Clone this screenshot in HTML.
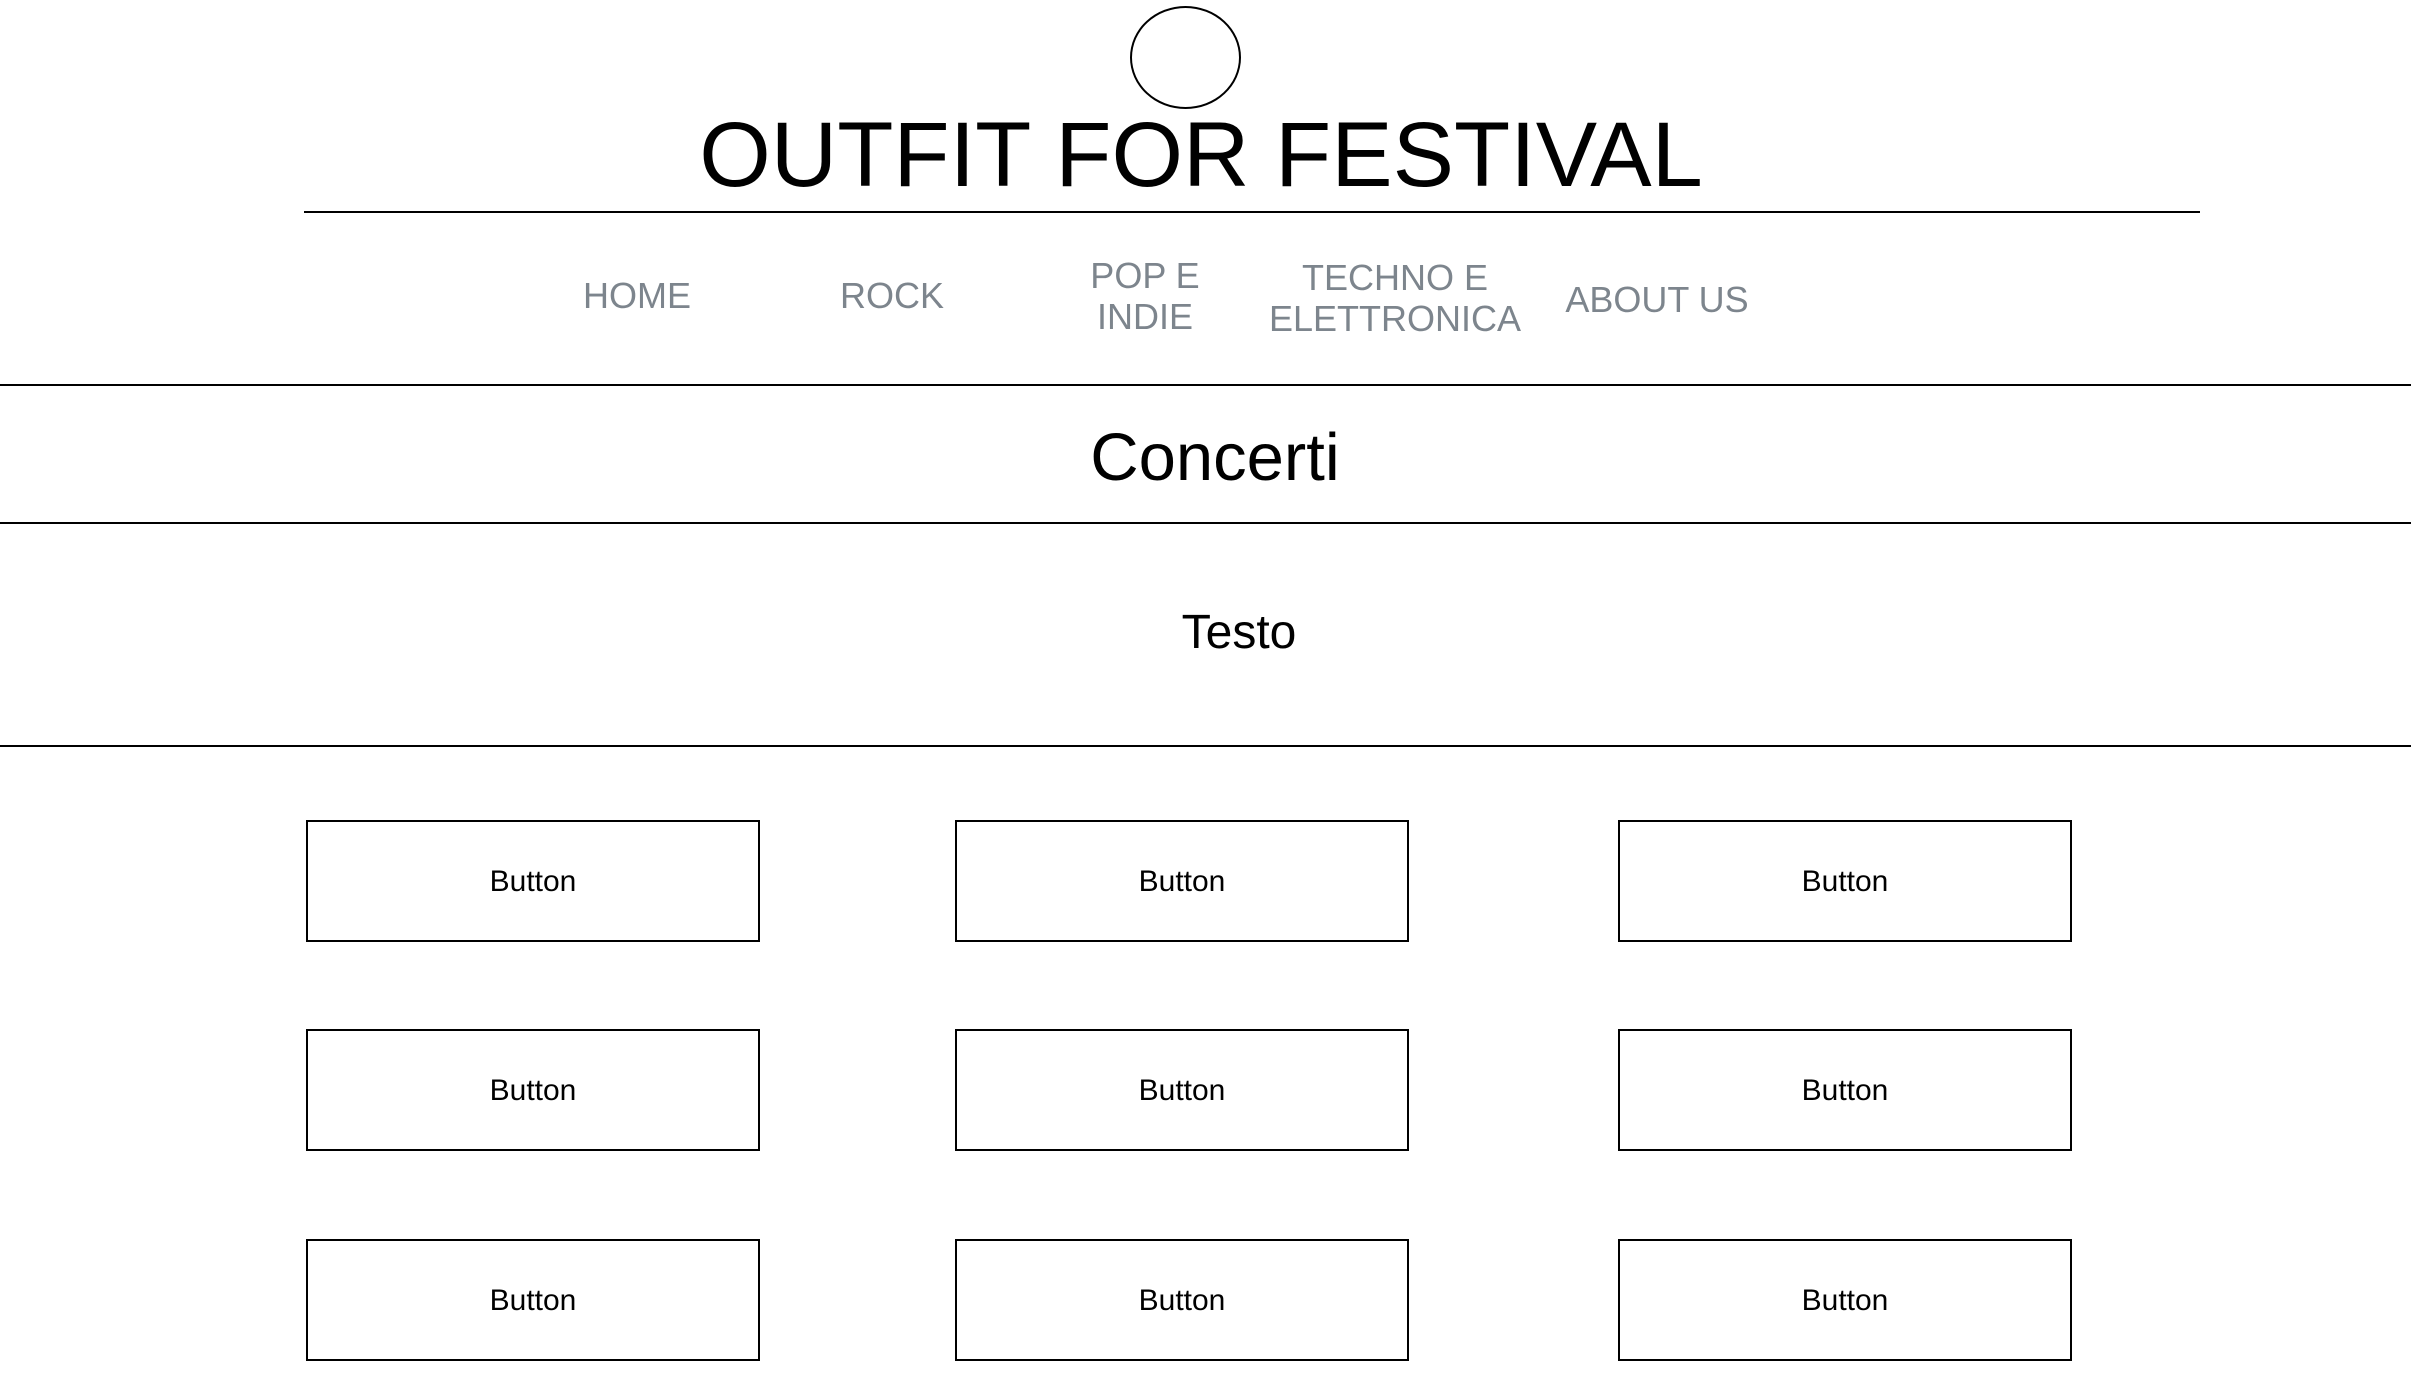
<!DOCTYPE html>
<html><head><meta charset="utf-8"><style>
*{margin:0;padding:0;box-sizing:border-box}
body{width:2411px;height:1381px;background:#fff;position:relative;overflow:hidden;font-family:"Liberation Sans",Arial,sans-serif;color:#000}
.a{position:absolute}
.c{text-align:center;white-space:nowrap;transform:translateX(-50%)}
.hl{position:absolute;height:2px;background:#000}
.nav{position:absolute;color:#7d858d;font-size:36px;line-height:41px;text-align:center;transform:translateX(-50%);white-space:nowrap}
.btn{position:absolute;width:454px;height:122px;border:2px solid #000;display:flex;align-items:center;justify-content:center;font-size:30px;padding-top:2px}
</style></head><body>
<div class="a" style="left:1130px;top:6px;width:111px;height:103px;border:2px solid #000;border-radius:50%"></div>
<div class="a c" style="left:1201px;top:105px;font-size:92px;line-height:100px">OUTFIT FOR FESTIVAL</div>
<div class="hl" style="left:304px;width:1896px;top:211px"></div>
<div class="nav" style="left:637px;top:275px">HOME</div>
<div class="nav" style="left:892px;top:275px">ROCK</div>
<div class="nav" style="left:1145px;top:255px">POP E<br>INDIE</div>
<div class="nav" style="left:1395px;top:257px">TECHNO E<br>ELETTRONICA</div>
<div class="nav" style="left:1657px;top:279px">ABOUT US</div>
<div class="hl" style="left:0;width:2411px;top:384px"></div>
<div class="a c" style="left:1215px;top:418px;font-size:67px;line-height:80px">Concerti</div>
<div class="hl" style="left:0;width:2411px;top:522px"></div>
<div class="a c" style="left:1239px;top:603px;font-size:48px;line-height:60px">Testo</div>
<div class="hl" style="left:0;width:2411px;top:745px"></div>
<div class="btn" style="left:306px;top:820px">Button</div>
<div class="btn" style="left:955px;top:820px">Button</div>
<div class="btn" style="left:1618px;top:820px">Button</div>
<div class="btn" style="left:306px;top:1029px">Button</div>
<div class="btn" style="left:955px;top:1029px">Button</div>
<div class="btn" style="left:1618px;top:1029px">Button</div>
<div class="btn" style="left:306px;top:1239px">Button</div>
<div class="btn" style="left:955px;top:1239px">Button</div>
<div class="btn" style="left:1618px;top:1239px">Button</div>
</body></html>
